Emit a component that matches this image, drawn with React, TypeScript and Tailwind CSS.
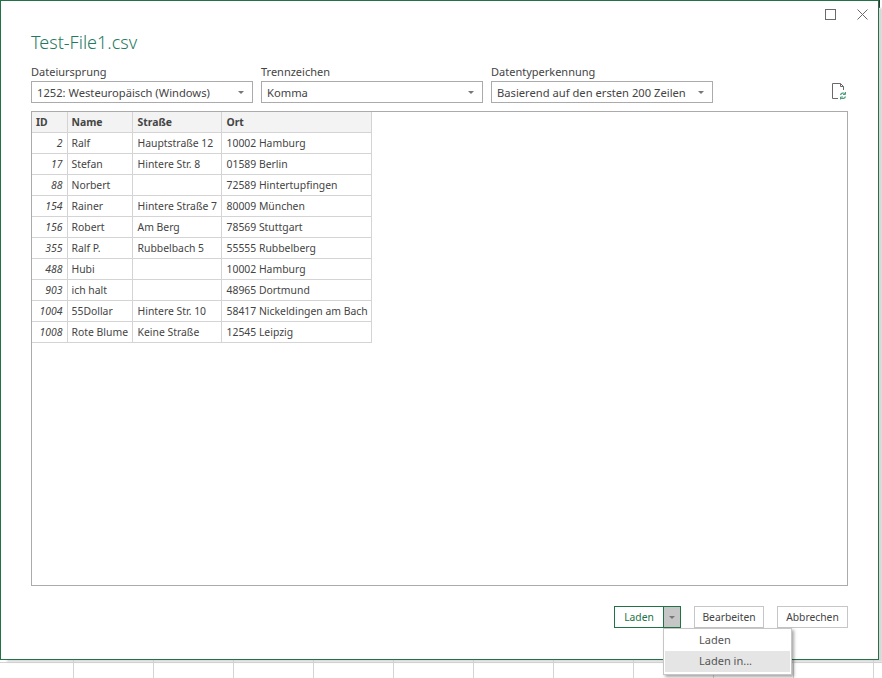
const rows: [string, string, string, string][] = [
  ["2", "Ralf", "Hauptstraße 12", "10002 Hamburg"],
  ["17", "Stefan", "Hintere Str. 8", "01589 Berlin"],
  ["88", "Norbert", "", "72589 Hintertupfingen"],
  ["154", "Rainer", "Hintere Straße 7", "80009 München"],
  ["156", "Robert", "Am Berg", "78569 Stuttgart"],
  ["355", "Ralf P.", "Rubbelbach 5", "55555 Rubbelberg"],
  ["488", "Hubi", "", "10002 Hamburg"],
  ["903", "ich halt", "", "48965 Dortmund"],
  ["1004", "55Dollar", "Hintere Str. 10", "58417 Nickeldingen am Bach"],
  ["1008", "Rote Blume", "Keine Straße", "12545 Leipzig"],
];

function Caret() {
  return <span className="w-0 h-0 border-x-[3px] border-x-transparent border-t-[3px] border-t-[#777]" />;
}

function Select({ label, value, width }: { label: string; value: string; width: string }) {
  return (
    <div className={`flex flex-col ${width}`}>
      <div className="h-[18px] text-[11px] leading-[17px] text-[#444] whitespace-nowrap">{label}</div>
      <div className="h-[22px] border border-[#ababab] flex items-center justify-between pl-[5px] pr-[8px] text-[11.2px] text-[#444] whitespace-nowrap">
        <span className="pt-[2px]">{value}</span>
        <Caret />
      </div>
    </div>
  );
}

export default function App() {
  return (
    <div className="relative w-[882px] h-[678px] overflow-hidden bg-white font-['Noto_Sans',sans-serif]">
      <div className="absolute inset-0 bg-[linear-gradient(to_right,#d4d4d4_1px,transparent_1px)] bg-[length:80px_100%] bg-[position:73px_0]" />
      <div className="absolute left-0 right-0 top-[662px] h-px bg-[#d4d4d4]" />
      <div className="absolute left-[879px] top-0 w-px h-[8px] bg-[#333]" />
      <div className="absolute left-[7px] top-[8px] w-[876px] h-[654px] bg-[#c8c8c8]/70 blur-[1px]" />
      <div className="relative w-[879px] h-[660px] bg-white border border-[#217346] flex flex-col">
        <div className="h-[27px] flex justify-end items-start pt-[8px] pr-[10px] gap-[21px] shrink-0">
          <svg width="11" height="11" viewBox="0 0 11 11"><rect x="0.5" y="0.5" width="10" height="10" fill="none" stroke="#6a6a6a" /></svg>
          <svg width="11" height="11" viewBox="0 0 11 11"><path d="M0.5 0.5L10.5 10.5M10.5 0.5L0.5 10.5" stroke="#6a6a6a" strokeWidth="1" /></svg>
        </div>
        <div className="pl-[30px] h-[35px] text-[18px] font-light leading-[29px] text-[#1f7a5f] shrink-0">Test-File1.csv</div>
        <div className="pl-[30px] flex gap-[8px] h-[48px] shrink-0 relative">
          <Select label="Dateiursprung" value="1252: Westeuropäisch (Windows)" width="w-[222px]" />
          <Select label="Trennzeichen" value="Komma" width="w-[222px]" />
          <Select label="Datentyperkennung" value="Basierend auf den ersten 200 Zeilen" width="w-[222px]" />
          <svg width="16" height="18" viewBox="0 0 16 18" className="absolute left-[830px] top-[20px]">
            <path d="M9.5 0.5H1.5V15.5H7M9.5 0.5L12.5 3.5V7M9.5 0.5V3.5H12.5" fill="none" stroke="#6a6a6a" />
            <path d="M9.5 12A3 3 0 0 1 14 10.5M14.5 13.5A3 3 0 0 1 10 15" fill="none" stroke="#4e9d7c" strokeWidth="1.2" />
            <path d="M14.5 9V11.5H12M9.5 16.5V14H12" fill="none" stroke="#4e9d7c" />
          </svg>
        </div>
        <div className="ml-[30px] w-[817px] h-[475px] border border-[#ababab] shrink-0 text-[10.4px] text-[#444]">
          <table className="border-collapse table-fixed w-[339px]">
            <colgroup>
              <col className="w-[35px]" />
              <col className="w-[65px]" />
              <col className="w-[89px]" />
              <col className="w-[150px]" />
            </colgroup>
            <thead>
              <tr className="h-[20px] bg-[#f3f3f3] font-bold">
                {["ID", "Name", "Straße", "Ort"].map((h, i) => (
                  <th key={h} className={`border-r border-b border-[#d4d4d4] pt-[2px] pb-0 pr-0 text-left font-bold ${i >= 2 ? "pl-[5px]" : "pl-[4px]"}`}>{h}</th>
                ))}
              </tr>
            </thead>
            <tbody>
              {rows.map((r) => (
                <tr key={r[0]} className="h-[21px]">
                  <td className="border-r border-b border-[#d4d4d4] px-[4px] pt-[2px] text-right italic">{r[0]}</td>
                  <td className="border-r border-b border-[#d4d4d4] pl-[4px] pt-[2px] whitespace-nowrap">{r[1]}</td>
                  <td className="border-r border-b border-[#d4d4d4] pl-[5px] pt-[2px] whitespace-nowrap">{r[2]}</td>
                  <td className="border-r border-b border-[#d4d4d4] pl-[5px] pt-[2px] whitespace-nowrap">{r[3]}</td>
                </tr>
              ))}
            </tbody>
          </table>
        </div>
        <div className="flex justify-end pr-[30px] pt-[20px] text-[10.3px] text-[#444] relative">
          <div className="flex h-[22px] border border-[#217346] w-[67px]">
            <div className="w-[48px] flex items-center justify-center pt-[2px] text-[#217346]">Laden</div>
            <div className="w-[17px] bg-[#c6c6c6] border-l border-[#217346] flex items-center justify-center"><Caret /></div>
          </div>
          <div className="ml-[13px] w-[70px] h-[22px] border border-[#c6c6c6] flex items-center justify-center pt-[2px]">Bearbeiten</div>
          <div className="ml-[13px] w-[71px] h-[22px] border border-[#c6c6c6] flex items-center justify-center pt-[2px]">Abbrechen</div>
          <div className="absolute left-[662px] top-[42px] w-[129px] h-[47px] bg-white border border-[#c6c6c6] p-[1px] text-[11px] text-[#555] shadow-[2px_2px_3px_rgba(0,0,0,0.35)]">
            <div className="h-[21px] pl-[34px] flex items-center">Laden</div>
            <div className="h-[21px] pl-[34px] flex items-center bg-[#e5e5e5]">Laden in...</div>
          </div>
        </div>
      </div>
    </div>
  );
}
